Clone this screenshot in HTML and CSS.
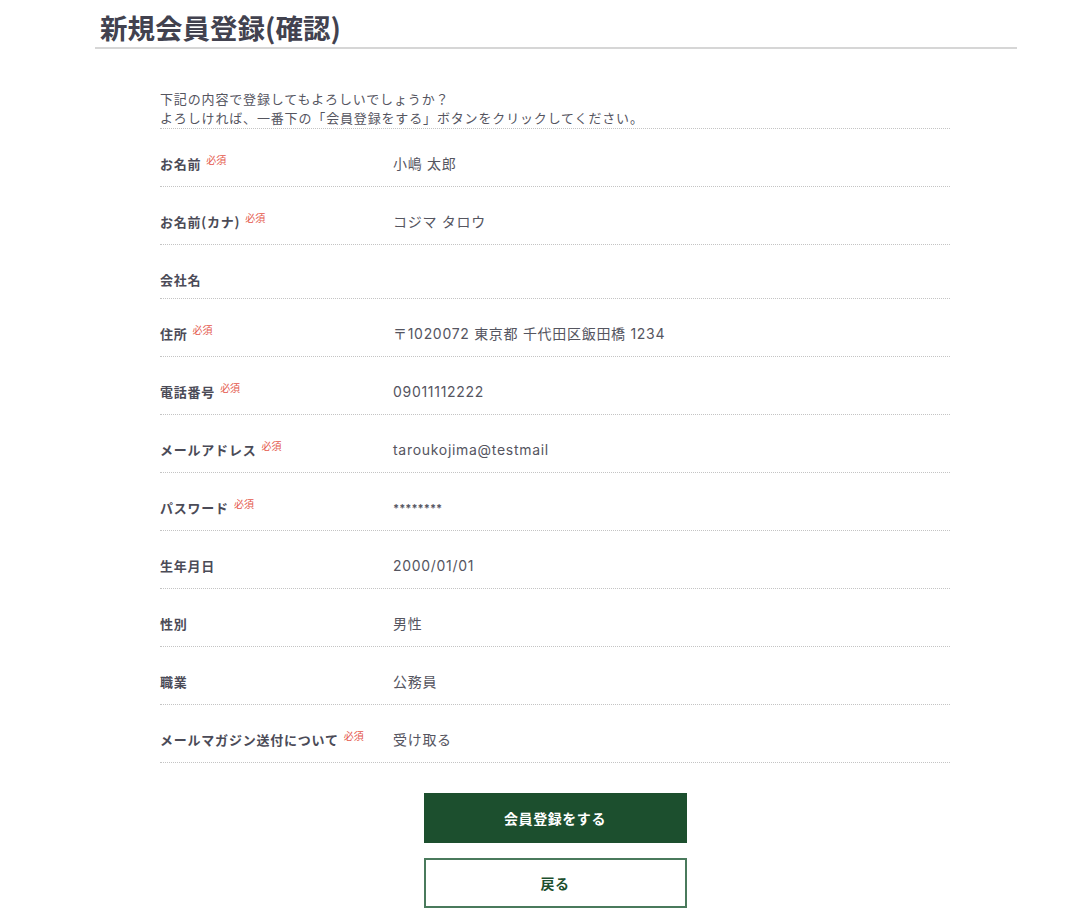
FILE: index.html
```html
<!DOCTYPE html>
<html lang="ja">
<head>
<meta charset="utf-8">
<title>新規会員登録(確認)</title>
<link rel="stylesheet" href="styles.css">
</head>
<body>
<div class="page">
  <h1 class="page-title">新規会員登録(確認)</h1>
  <div class="content">
    <p class="intro">下記の内容で登録してもよろしいでしょうか？<br>よろしければ、一番下の「会員登録をする」ボタンをクリックしてください。</p>
    <dl class="confirm">
      <div class="row"><dt class="label">お名前<span class="req">必須</span></dt><dd class="value">小嶋 太郎</dd></div>
      <div class="row"><dt class="label">お名前(カナ)<span class="req">必須</span></dt><dd class="value">コジマ タロウ</dd></div>
      <div class="row"><dt class="label">会社名</dt><dd class="value"></dd></div>
      <div class="row"><dt class="label">住所<span class="req">必須</span></dt><dd class="value">〒1020072 東京都 千代田区飯田橋 1234</dd></div>
      <div class="row"><dt class="label">電話番号<span class="req">必須</span></dt><dd class="value">09011112222</dd></div>
      <div class="row"><dt class="label">メールアドレス<span class="req">必須</span></dt><dd class="value">taroukojima@testmail</dd></div>
      <div class="row"><dt class="label">パスワード<span class="req">必須</span></dt><dd class="value pw">********</dd></div>
      <div class="row"><dt class="label">生年月日</dt><dd class="value">2000/01/01</dd></div>
      <div class="row"><dt class="label">性別</dt><dd class="value">男性</dd></div>
      <div class="row"><dt class="label">職業</dt><dd class="value">公務員</dd></div>
      <div class="row"><dt class="label">メールマガジン送付について<span class="req">必須</span></dt><dd class="value">受け取る</dd></div>
    </dl>
    <div class="actions">
      <button class="btn btn-primary" type="button">会員登録をする</button>
      <button class="btn btn-secondary" type="button">戻る</button>
    </div>
  </div>
</div>
</body>
</html>
```
FILE: styles.css
```css
* { box-sizing: border-box; }
html, body { margin: 0; padding: 0; background: #fff; }
body {
  font-family: "Noto Sans CJK JP", "Noto Sans", "Liberation Sans", sans-serif;
  color: #4b4b57;
}
.page {
  width: 922px;
  margin-left: 95px;
}
.page-title {
  margin: 0;
  padding: 7px 0 0 5px;
  font-size: 27.5px;
  line-height: 40px;
  font-weight: 700;
  color: #42424f;
  border-bottom: 2px solid #d6d6d6;
}
.content {
  width: 790px;
  margin-left: 65px;
  padding-bottom: 14px;
}
.intro {
  margin: 40px 0 0;
  padding-bottom: 1px;
  font-size: 13px;
  line-height: 19px;
  letter-spacing: 0.065em;
  color: #55555f;
  border-bottom: 1px dotted #c4c4c4;
}
.confirm { margin: 0; }
.row {
  display: flex;
  align-items: flex-start;
  padding: 25px 0 8px;
  border-bottom: 1px dotted #c4c4c4;
}
.label {
  width: 233px;
  flex: none;
  font-size: 13px;
  line-height: 20px;
  font-weight: 700;
  letter-spacing: 0.06em;
  color: #4b4b57;
}
.req {
  display: inline-block;
  vertical-align: top;
  margin-left: 5px;
  margin-top: -1px;
  font-size: 10px;
  line-height: 14px;
  font-weight: 400;
  letter-spacing: 0;
  color: #e4584c;
}
.value {
  margin: -4px 0 0;
  font-family: "Inter", "Noto Sans CJK JP", sans-serif;
  font-size: 14px;
  line-height: 28px;
  letter-spacing: 0.05em;
  color: #55555f;
}
.value.pw { font-size: 11px; font-weight: 700; letter-spacing: 0; }
.actions {
  display: flex;
  flex-direction: column;
  align-items: center;
  gap: 15px;
  margin-top: 30px;
}
.btn {
  width: 263px;
  height: 50px;
  font-family: inherit;
  font-size: 14px;
  font-weight: 700;
  letter-spacing: 0.04em;
  cursor: pointer;
  border-radius: 0;
}
.btn-primary {
  background: #1c4f2e;
  color: #fff;
  border: 1px solid #1c4f2e;
}
.btn-secondary {
  background: #fff;
  color: #1c4f2e;
  border: 2px solid #4a7a5c;
}
```
